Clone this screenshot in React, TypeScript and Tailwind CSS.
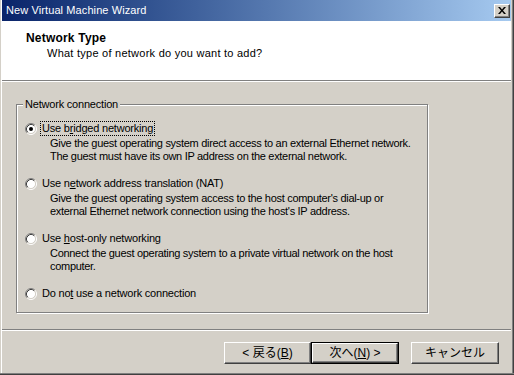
import React from "react";

function Radio({ checked }: { checked?: boolean }) {
  return (
    <svg width="12" height="12" viewBox="0 0 12 12" className="shrink-0">
      <circle cx="6" cy="6" r="4.5" fill="#ffffff" />
      <path d="M2.11 9.89 A5.5 5.5 0 0 1 9.89 2.11" stroke="#808080" strokeWidth="1" fill="none" />
      <path d="M9.89 2.11 A5.5 5.5 0 0 1 2.11 9.89" stroke="#ffffff" strokeWidth="1" fill="none" />
      <path d="M2.82 9.18 A4.5 4.5 0 0 1 9.18 2.82" stroke="#404040" strokeWidth="1" fill="none" />
      <path d="M9.18 2.82 A4.5 4.5 0 0 1 2.82 9.18" stroke="#D4D0C8" strokeWidth="1" fill="none" />
      {checked && <circle cx="6" cy="6" r="2" fill="#000000" />}
    </svg>
  );
}

function Option({
  checked,
  focus,
  label,
  desc,
  first,
}: {
  checked?: boolean;
  focus?: boolean;
  label: React.ReactNode;
  desc?: string[];
  first?: boolean;
}) {
  return (
    <div className={first ? "" : "mt-[13px]"}>
      <div className="flex items-center h-[15px]">
        <Radio checked={checked} />
        <span
          className={
            "ml-[3px] px-[1px] leading-[13px] border " +
            (focus ? "border-dotted border-black" : "border-transparent")
          }
        >
          {label}
        </span>
      </div>
      {desc && (
        <div className="mt-[1px] pl-[25px] leading-[13px] tracking-[-0.3px]">
          {desc.map((d, i) => (
            <div key={i} className="whitespace-nowrap">
              {d}
            </div>
          ))}
        </div>
      )}
    </div>
  );
}

function Button({
  children,
  isDefault,
  w,
}: {
  children: React.ReactNode;
  isDefault?: boolean;
  w: string;
}) {
  const inner = (
    <div className="h-full w-full border-t border-l border-t-white border-l-white border-b border-r border-b-[#404040] border-r-[#404040] shadow-[inset_-1px_-1px_0_#808080] flex items-center justify-center text-[12px] leading-none">
      {children}
    </div>
  );
  if (isDefault) {
    return <div className={"h-[22px] border border-black " + w}>{inner}</div>;
  }
  return <div className={"h-[22px] " + w}>{inner}</div>;
}

export default function App() {
  return (
    <div className="w-[514px] h-[375px] overflow-hidden bg-[#D4D0C8] flex flex-col font-['Liberation_Sans','Noto_Sans_CJK_JP',sans-serif] text-[11px] tracking-[-0.2px] text-black">
      <div className="flex flex-1 min-h-0">
        {/* left border */}
        <div className="w-[1px] bg-[#D4D0C8]" />
        <div className="w-[1px] bg-white" />
        {/* content */}
        <div className="w-[509px] flex flex-col">
          {/* title bar */}
          <div className="h-[21px] bg-linear-to-r from-[#0A246A] to-[#A6CAF0] flex items-center justify-between pl-[4px] pr-[1px]">
            <span className="text-white text-[11px] tracking-[0.1px] leading-none">New Virtual Machine Wizard</span>
            <div className="w-[16px] h-[14px] bg-[#D4D0C8] border-t border-l border-t-white border-l-white border-b border-r border-b-[#404040] border-r-[#404040] shadow-[inset_-1px_-1px_0_#808080] flex items-center justify-center">
              <svg width="8" height="7" viewBox="0 0 8 7">
                <path d="M0 0h2l2 2.5L6 0h2L5 3.5 8 7H6L4 4.5 2 7H0l3-3.5z" fill="#000" />
              </svg>
            </div>
          </div>
          {/* header */}
          <div className="h-[59px] bg-white pt-[10px]">
            <div className="pl-[24px] text-[12px] font-bold leading-[14px] tracking-[0.2px]">Network Type</div>
            <div className="pl-[45px] mt-[2px] leading-[13px] tracking-[0.25px]">What type of network do you want to add?</div>
          </div>
          <div className="h-[1px] bg-[#808080]" />
          <div className="h-[1px] bg-white" />
          {/* body */}
          <div className="h-[247px] pt-[22px] pl-[14px]">
            <div className="relative w-[412px] h-[209px] border border-[#808080] shadow-[inset_1px_1px_0_#ffffff,1px_1px_0_#ffffff] pt-[16px] pl-[8px]">
              <span className="absolute top-[-7px] left-[6px] px-[2px] bg-[#D4D0C8] leading-[13px]">
                Network connection
              </span>
              <Option
                first
                checked
                focus
                label={
                  <>
                    Use b<span className="underline">r</span>idged networking
                  </>
                }
                desc={[
                  "Give the guest operating system direct access to an external Ethernet network.",
                  "The guest must have its own IP address on the external network.",
                ]}
              />
              <Option
                label={
                  <>
                    Use n<span className="underline">e</span>twork address translation (NAT)
                  </>
                }
                desc={[
                  "Give the guest operating system access to the host computer's dial-up or",
                  "external Ethernet network connection using the host's IP address.",
                ]}
              />
              <Option
                label={
                  <>
                    Use <span className="underline">h</span>ost-only networking
                  </>
                }
                desc={[
                  "Connect the guest operating system to a private virtual network on the host",
                  "computer.",
                ]}
              />
              <Option
                label={
                  <>
                    Do no<span className="underline">t</span> use a network connection
                  </>
                }
              />
            </div>
          </div>
          <div className="h-[1px] bg-[#808080]" />
          <div className="h-[1px] bg-white" />
          {/* buttons */}
          <div className="flex-1 pt-[11px] pr-[12px] flex justify-end items-start tracking-normal">
            <Button w="w-[87px]">
              &lt; 戻る(<span className="underline">B</span>)
            </Button>
            <Button w="w-[88px]" isDefault>
              次へ(<span className="underline">N</span>) &gt;
            </Button>
            <div className="w-[12px]" />
            <Button w="w-[88px]">キャンセル</Button>
          </div>
        </div>
        {/* right border */}
        <div className="w-[1px] bg-[#D4D0C8]" />
        <div className="w-[1px] bg-[#808080]" />
        <div className="w-[1px] bg-[#404040]" />
      </div>
      <div className="h-[1px] bg-[#808080]" />
      <div className="h-[1px] bg-[#404040]" />
    </div>
  );
}
